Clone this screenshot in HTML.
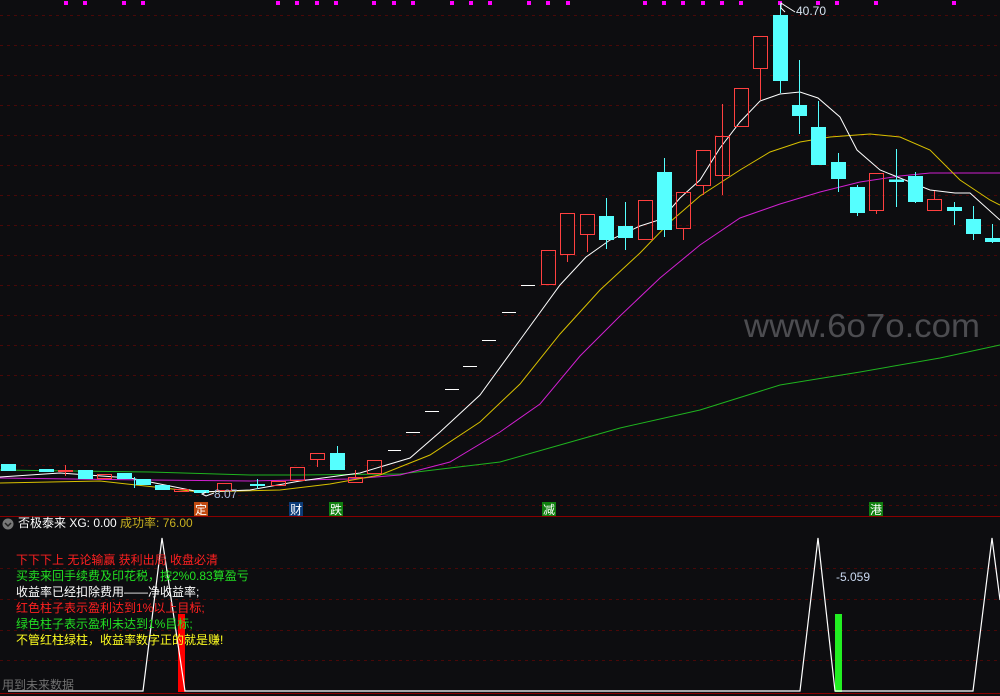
<!DOCTYPE html><html><head><meta charset="utf-8"><style>
body{margin:0;background:#0d0d10;width:1000px;height:696px;overflow:hidden;font-family:"Liberation Sans","Noto Sans CJK SC",sans-serif}
svg{position:absolute;left:0;top:0}
.t{position:absolute;font-size:12px;line-height:14px;white-space:nowrap}
</style></head><body>
<svg width="1000" height="696" viewBox="0 0 1000 696">
<g stroke="#4a0808" stroke-dasharray="3,4" stroke-width="1">
<line x1="0" y1="15.5" x2="1000" y2="15.5"/><line x1="0" y1="45.5" x2="1000" y2="45.5"/><line x1="0" y1="75.5" x2="1000" y2="75.5"/><line x1="0" y1="105.5" x2="1000" y2="105.5"/><line x1="0" y1="135.5" x2="1000" y2="135.5"/><line x1="0" y1="165.5" x2="1000" y2="165.5"/><line x1="0" y1="195.5" x2="1000" y2="195.5"/><line x1="0" y1="225.5" x2="1000" y2="225.5"/><line x1="0" y1="255.5" x2="1000" y2="255.5"/><line x1="0" y1="285.5" x2="1000" y2="285.5"/><line x1="0" y1="315.5" x2="1000" y2="315.5"/><line x1="0" y1="345.5" x2="1000" y2="345.5"/><line x1="0" y1="375.5" x2="1000" y2="375.5"/><line x1="0" y1="405.5" x2="1000" y2="405.5"/><line x1="0" y1="435.5" x2="1000" y2="435.5"/><line x1="0" y1="465.5" x2="1000" y2="465.5"/><line x1="0" y1="495.5" x2="1000" y2="495.5"/><line x1="0" y1="505.5" x2="1000" y2="505.5"/>
<line x1="0" y1="568.5" x2="1000" y2="568.5"/><line x1="0" y1="599.5" x2="1000" y2="599.5"/><line x1="0" y1="630.5" x2="1000" y2="630.5"/><line x1="0" y1="660.5" x2="1000" y2="660.5"/>
</g>
<g fill="#ff00ff">
<rect x="64" y="1" width="4" height="4"/><rect x="83" y="1" width="4" height="4"/><rect x="122" y="1" width="4" height="4"/><rect x="141" y="1" width="4" height="4"/><rect x="276" y="1" width="4" height="4"/><rect x="295" y="1" width="4" height="4"/><rect x="315" y="1" width="4" height="4"/><rect x="334" y="1" width="4" height="4"/><rect x="372" y="1" width="4" height="4"/><rect x="392" y="1" width="4" height="4"/><rect x="411" y="1" width="4" height="4"/><rect x="450" y="1" width="4" height="4"/><rect x="469" y="1" width="4" height="4"/><rect x="488" y="1" width="4" height="4"/><rect x="527" y="1" width="4" height="4"/><rect x="546" y="1" width="4" height="4"/><rect x="566" y="1" width="4" height="4"/><rect x="643" y="1" width="4" height="4"/><rect x="662" y="1" width="4" height="4"/><rect x="681" y="1" width="4" height="4"/><rect x="701" y="1" width="4" height="4"/><rect x="720" y="1" width="4" height="4"/><rect x="739" y="1" width="4" height="4"/><rect x="778" y="1" width="4" height="4"/><rect x="816" y="1" width="4" height="4"/><rect x="835" y="1" width="4" height="4"/><rect x="874" y="1" width="4" height="4"/><rect x="952" y="1" width="4" height="4"/>
</g>
<text x="744" y="337" font-family="Liberation Sans" font-size="33" fill="#4c4c50" textLength="236" lengthAdjust="spacingAndGlyphs">www.6o7o.com</text>
<!-- MA lines -->
<polyline fill="none" stroke="#1fb31f" stroke-width="1" points="0,470 150,472 250,475 300,475 400,474 500,462 560,445 620,428 700,410 780,385 860,372 940,358 1000,345"/>
<polyline fill="none" stroke="#d020d0" stroke-width="1" points="0,478 150,480 250,481 350,479 400,475 450,462 500,432 540,404 580,356 620,316 660,278 700,245 740,218 780,204 820,192 860,182 900,176 930,173 1000,173"/>
<polyline fill="none" stroke="#d8c000" stroke-width="1" points="0,483 100,481 200,492 280,490 330,484 380,475 430,455 480,422 520,384 560,334 600,290 640,253 670,222 700,196 740,170 770,152 800,142 830,137 870,134 900,137 930,150 960,180 990,200 1000,205"/>
<polyline fill="none" stroke="#ffffff" stroke-width="1" points="0,477 60,473 130,478 200,492 250,490 300,481 360,473 410,458 440,432 480,395 520,340 560,285 586,257 610,240 640,226 662,219 680,198 700,180 720,148 740,122 760,101 780,94 800,92 818,98 840,117 857,150 880,170 905,180 930,190 955,193 970,193 1000,220"/>
<!-- candles -->
<g fill="#55ffff" stroke="#55ffff">
<rect x="1.5" y="464.5" width="14" height="6"/><rect x="39.5" y="469.5" width="14" height="2"/><rect x="78.5" y="470.5" width="14" height="8"/><rect x="117.5" y="473.5" width="14" height="5"/>
<line x1="134.5" y1="477" x2="134.5" y2="488"/><rect x="136.5" y="479.5" width="14" height="5"/><rect x="155.5" y="485.5" width="14" height="4"/><rect x="194.5" y="490.5" width="14" height="2"/>
<line x1="257.5" y1="479" x2="257.5" y2="489"/><rect x="250.5" y="484.5" width="14" height="1"/>
<line x1="337.5" y1="446" x2="337.5" y2="470"/><rect x="330.5" y="453.5" width="14" height="16"/>
<line x1="606.5" y1="198" x2="606.5" y2="249"/><rect x="599.5" y="216.5" width="14" height="23"/>
<line x1="625.5" y1="202" x2="625.5" y2="250"/><rect x="618.5" y="226.5" width="14" height="11"/>
<line x1="664.5" y1="158" x2="664.5" y2="237"/><rect x="657.5" y="172.5" width="14" height="57"/>
<line x1="780.5" y1="4" x2="780.5" y2="93"/><rect x="773.5" y="15.5" width="14" height="65"/>
<line x1="799.5" y1="60" x2="799.5" y2="134"/><rect x="792.5" y="105.5" width="14" height="10"/>
<line x1="818.5" y1="101" x2="818.5" y2="165"/><rect x="811.5" y="127.5" width="14" height="37"/>
<line x1="838.5" y1="153" x2="838.5" y2="192"/><rect x="831.5" y="162.5" width="14" height="16"/>
<line x1="857.5" y1="185" x2="857.5" y2="216"/><rect x="850.5" y="187.5" width="14" height="25"/>
<line x1="896.5" y1="149" x2="896.5" y2="207"/><rect x="889.5" y="180" width="14" height="1.5"/>
<line x1="915.5" y1="172" x2="915.5" y2="203"/><rect x="908.5" y="176.5" width="14" height="25"/>
<line x1="954.5" y1="202" x2="954.5" y2="225"/><rect x="947.5" y="207.5" width="14" height="3"/>
<line x1="973.5" y1="206" x2="973.5" y2="240"/><rect x="966.5" y="219.5" width="14" height="14"/>
<line x1="992.5" y1="224" x2="992.5" y2="243"/><rect x="985.5" y="238.5" width="14" height="3"/>
</g>
<g fill="none" stroke="#ff4040">
<line x1="65.5" y1="465" x2="65.5" y2="476"/><rect x="58.5" y="470.5" width="14" height="1"/>
<rect x="97.5" y="474.5" width="14" height="4"/><rect x="174.5" y="489.5" width="14" height="2"/>
<rect x="217.5" y="483.5" width="14" height="7"/><rect x="271.5" y="481.5" width="14" height="4"/>
<rect x="290.5" y="467.5" width="14" height="13"/><line x1="317.5" y1="460" x2="317.5" y2="467"/><rect x="310.5" y="453.5" width="14" height="6"/>
<line x1="355.5" y1="470" x2="355.5" y2="477"/><rect x="348.5" y="477.5" width="14" height="5"/>
<rect x="367.5" y="460.5" width="14" height="13"/>
<rect x="541.5" y="250.5" width="14" height="34"/>
<line x1="567.5" y1="255" x2="567.5" y2="262"/><rect x="560.5" y="213.5" width="14" height="41"/>
<line x1="587.5" y1="235" x2="587.5" y2="252"/><rect x="580.5" y="214.5" width="14" height="20"/>
<rect x="638.5" y="200.5" width="14" height="39"/>
<line x1="683.5" y1="229" x2="683.5" y2="240"/><rect x="676.5" y="192.5" width="14" height="36"/>
<line x1="703.5" y1="186" x2="703.5" y2="195"/><rect x="696.5" y="150.5" width="14" height="35"/>
<line x1="722.5" y1="104" x2="722.5" y2="195"/><rect x="715.5" y="136.5" width="14" height="39"/>
<rect x="734.5" y="88.5" width="14" height="38"/>
<line x1="760.5" y1="69" x2="760.5" y2="100"/><rect x="753.5" y="36.5" width="14" height="32"/>
<line x1="876.5" y1="210" x2="876.5" y2="214"/><rect x="869.5" y="173.5" width="14" height="37"/>
<line x1="934.5" y1="191" x2="934.5" y2="199"/><rect x="927.5" y="199.5" width="14" height="11"/>
</g>
<g stroke="#ffffff"><line x1="388" y1="450.5" x2="401" y2="450.5"/><line x1="406" y1="432.5" x2="420" y2="432.5"/><line x1="425" y1="411.5" x2="439" y2="411.5"/><line x1="445" y1="389.5" x2="459" y2="389.5"/><line x1="463" y1="366.5" x2="477" y2="366.5"/><line x1="482" y1="340.5" x2="496" y2="340.5"/><line x1="502" y1="312.5" x2="516" y2="312.5"/><line x1="521" y1="285.5" x2="535" y2="285.5"/></g>
<polyline fill="none" stroke="#fff" points="785,12 781,8 781,3 784,5 795,12"/>
<text x="796" y="15" font-size="12" fill="#d8e4f0">40.70</text>
<polyline fill="none" stroke="#fff" points="206,492 202,494 206,496 214,493"/>
<text x="214" y="498" font-size="12" fill="#a8b8d8">8.07</text>
<!-- markers -->
<rect x="194" y="502" width="14" height="14" fill="#c04a10"/><rect x="289" y="502" width="14" height="14" fill="#0c3c78"/><rect x="329" y="502" width="14" height="14" fill="#108010"/><rect x="542" y="502" width="14" height="14" fill="#108010"/><rect x="869" y="502" width="14" height="14" fill="#108010"/>
<g font-size="12" fill="#fff" font-family="Noto Sans CJK SC"><text x="195" y="514">定</text><text x="290" y="514">财</text><text x="330" y="514">跌</text><text x="543" y="514">减</text><text x="870" y="514">港</text></g>
<line x1="0" y1="516.5" x2="1000" y2="516.5" stroke="#8a0000"/>
<line x1="0" y1="693.5" x2="1000" y2="693.5" stroke="#8a0000"/>
<!-- lower panel -->
<rect x="178" y="614" width="7" height="78" fill="#ff0000"/>
<rect x="835" y="614" width="7" height="78" fill="#22ee22"/>
<polyline fill="none" stroke="#fff" stroke-width="1.2" points="8,691 143,691 162,538 185,691 800,691 818,538 835,691 973,691 992,538 1000,600"/>
<circle cx="8" cy="524" r="5.5" fill="#777"/><polyline points="5,523 8,526 11,523" fill="none" stroke="#222" stroke-width="1.5"/>
</svg>
<div class="t" style="left:18px;top:516px;color:#fff">否极泰来 XG: 0.00 <span style="color:#c8b020">成功率: 76.00</span></div>
<div class="t" style="left:836px;top:570px;color:#c8d8f0">-5.059</div>
<div class="t" style="left:16px;top:553px;color:#ff2020">下下下上 无论输赢 获利出局 收盘必清</div>
<div class="t" style="left:16px;top:569px;color:#22e022">买卖来回手续费及印花税，按2%0.83算盈亏</div>
<div class="t" style="left:16px;top:585px;color:#fff">收益率已经扣除费用——净收益率;</div>
<div class="t" style="left:16px;top:601px;color:#ff2020">红色柱子表示盈利达到1%以上目标;</div>
<div class="t" style="left:16px;top:617px;color:#22e022">绿色柱子表示盈利未达到1%目标;</div>
<div class="t" style="left:16px;top:633px;color:#ffff20">不管红柱绿柱，收益率数字正的就是赚!</div>
<div class="t" style="left:2px;top:678px;color:#707070">用到未来数据</div>
</body></html>
